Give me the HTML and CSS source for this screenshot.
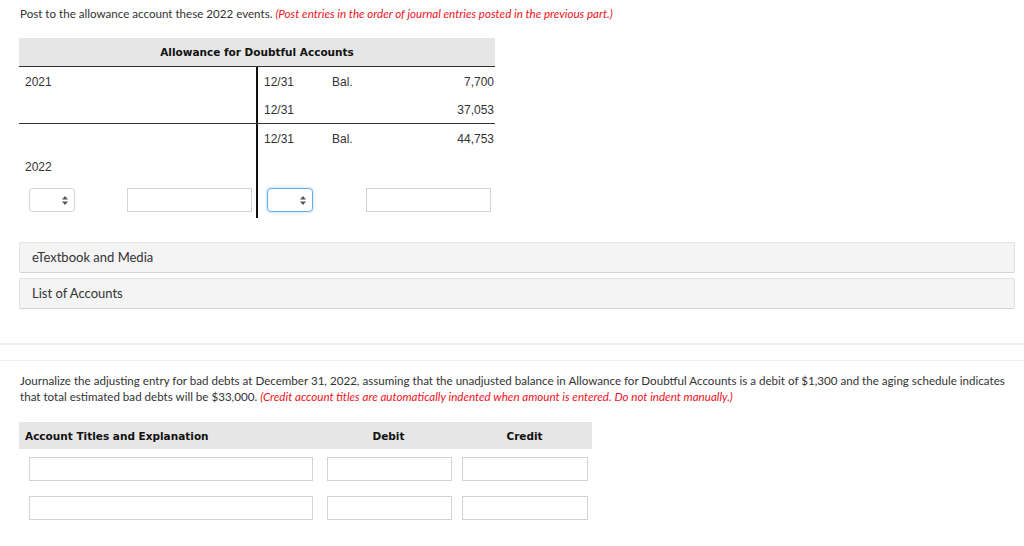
FILE: index.html
```html
<!DOCTYPE html>
<html>
<head>
<meta charset="utf-8">
<link rel="stylesheet" href="styles.css">
</head>
<body>
<div class="part">
  <p class="instr">Post to the allowance account these 2022 events. <em class="note">(Post entries in the order of journal entries posted in the previous part.)</em></p>

  <div class="taccount">
    <div class="t-head">Allowance for Doubtful Accounts</div>
    <div class="t-sec t-sec-top">
      <div class="t-left">
        <div class="t-row">2021</div>
        <div class="t-row"></div>
      </div>
      <div class="t-right">
        <div class="t-row t-entry"><span class="d">12/31</span><span class="b">Bal.</span><span class="amt">7,700</span></div>
        <div class="t-row t-entry"><span class="d">12/31</span><span class="b"></span><span class="amt">37,053</span></div>
      </div>
    </div>
    <div class="t-sec">
      <div class="t-left">
        <div class="t-row"></div>
        <div class="t-row">2022</div>
        <div class="t-inputs t-inputs-left">
          <div class="select"><svg class="arrows" width="6" height="9" viewBox="0 0 6 9"><path d="M3 0 L6 3.5 H0 Z M0 5.5 H6 L3 9 Z" fill="#555"/></svg></div>
          <div class="field field-t"></div>
        </div>
      </div>
      <div class="t-right">
        <div class="t-row t-entry"><span class="d">12/31</span><span class="b">Bal.</span><span class="amt">44,753</span></div>
        <div class="t-row"></div>
        <div class="t-inputs t-inputs-right">
          <div class="select select-focus"><svg class="arrows" width="6" height="9" viewBox="0 0 6 9"><path d="M3 0 L6 3.5 H0 Z M0 5.5 H6 L3 9 Z" fill="#555"/></svg></div>
          <div class="field field-t"></div>
        </div>
      </div>
    </div>
  </div>

  <div class="panel panel-first">eTextbook and Media</div>
  <div class="panel">List of Accounts</div>
</div>

<div class="sep sep-thick"></div>
<div class="sep-gap"></div>
<div class="sep sep-thin"></div>

<div class="part part2">
  <p class="instr instr2">Journalize the adjusting entry for bad debts at December 31, 2022, assuming that the unadjusted balance in Allowance for Doubtful Accounts is a debit of $1,300 and the aging schedule indicates that total estimated bad debts will be $33,000. <em class="note">(Credit account titles are automatically indented when amount is entered. Do not indent manually.)</em></p>

  <div class="journal">
    <div class="j-head">
      <div class="jh jh-title">Account Titles and Explanation</div>
      <div class="jh jh-num">Debit</div>
      <div class="jh jh-num">Credit</div>
    </div>
    <div class="j-row">
      <div class="jc jc-title"><div class="field field-title"></div></div>
      <div class="jc jc-debit"><div class="field field-amt"></div></div>
      <div class="jc jc-credit"><div class="field field-amt2"></div></div>
    </div>
    <div class="j-row">
      <div class="jc jc-title"><div class="field field-title"></div></div>
      <div class="jc jc-debit"><div class="field field-amt"></div></div>
      <div class="jc jc-credit"><div class="field field-amt2"></div></div>
    </div>
  </div>
</div>
</body>
</html>
```

FILE: styles.css
```css
html, body {
  margin: 0;
  padding: 0;
  background: #fff;
}

body {
  font-family: "Lato", "Liberation Sans", sans-serif;
  color: #333;
}

.part {
  padding: 6px 9px 0 19px;
}

.instr {
  margin: 0 0 0 1px;
  font-size: 11.6px;
  line-height: 16px;
  color: #333;
}

.note {
  color: #ee1122;
  font-style: italic;
}

/* T account */
.taccount {
  width: 476px;
  margin-top: 16px;
  font-family: "Liberation Sans", Arial, sans-serif;
  font-size: 12px;
  color: #333;
}

.t-head {
  height: 28px;
  background: #e6e6e6;
  border-bottom: 1px solid #333;
  font-family: "DejaVu Sans", Verdana, sans-serif;
  font-weight: bold;
  font-size: 10.5px;
  color: #111;
  display: flex;
  align-items: center;
  justify-content: center;
}

.t-sec {
  display: flex;
}

.t-sec-top {
  border-bottom: 1px solid #333;
}

.t-left {
  width: 237px;
  border-right: 2px solid #111;
}

.t-right {
  width: 237px;
}

.t-row {
  height: 28px;
  line-height: 30px;
  padding-left: 6px;
}

.t-entry {
  display: flex;
  padding-left: 6px;
  padding-right: 1px;
}

.t-entry .d {
  width: 68px;
}

.t-entry .amt {
  margin-left: auto;
}

.t-inputs {
  height: 38px;
  display: flex;
  align-items: flex-start;
  padding-top: 8px;
  box-sizing: border-box;
}

.t-inputs-left {
  padding-left: 10px;
  gap: 52px;
}

.t-inputs-right {
  padding-left: 9px;
  gap: 53px;
}

.select {
  width: 46px;
  height: 24px;
  box-sizing: border-box;
  border: 1px solid #d4d4d4;
  border-radius: 4px;
  background: #fff;
  position: relative;
}

.select-focus {
  border-color: #66afe9;
  box-shadow: 0 0 3px rgba(102, 175, 233, 0.6);
}

.arrows {
  position: absolute;
  right: 6px;
  top: 7px;
}

.field {
  height: 24px;
  box-sizing: border-box;
  border: 1px solid #d2d2d2;
  background: #fff;
}

.field-t {
  width: 125px;
}

/* panels */
.panel {
  margin-top: 5px;
  height: 31px;
  box-sizing: border-box;
  border: 1px solid #e2e2e2;
  border-bottom-color: #d4d4d4;
  border-radius: 2px;
  background: #f4f4f4;
  font-size: 13px;
  line-height: 29px;
  padding-left: 12px;
  color: #333;
}

.panel-first {
  margin-top: 24px;
}

/* separators */
.sep {
  width: 100%;
}

.sep-thick {
  margin-top: 34px;
  height: 2px;
  background: #efefef;
}

.sep-gap {
  height: 15px;
}

.sep-thin {
  height: 1px;
  background: #f0f0f0;
}

.part2 {
  padding-top: 12px;
}

.instr2 {
  margin: 0 0 0 1px;
}

/* journal */
.journal {
  margin-top: 17px;
  width: 573px;
}

.j-head {
  display: grid;
  grid-template-columns: 301px 137px 135px;
  height: 27px;
  background: #e6e6e6;
  align-items: center;
  font-family: "DejaVu Sans", Verdana, sans-serif;
  font-weight: bold;
  font-size: 10.5px;
  color: #111;
}

.jh-title {
  padding-left: 6px;
}

.jh-num {
  text-align: center;
}

.j-row {
  display: grid;
  grid-template-columns: 301px 137px 135px;
  margin-top: 8px;
  height: 31px;
}

.jc-title {
  padding-left: 10px;
}

.jc-debit {
  padding-left: 7px;
}

.jc-credit {
  padding-left: 5px;
}

.field-title {
  width: 284px;
}

.field-amt {
  width: 125px;
}

.field-amt2 {
  width: 126px;
}
```
